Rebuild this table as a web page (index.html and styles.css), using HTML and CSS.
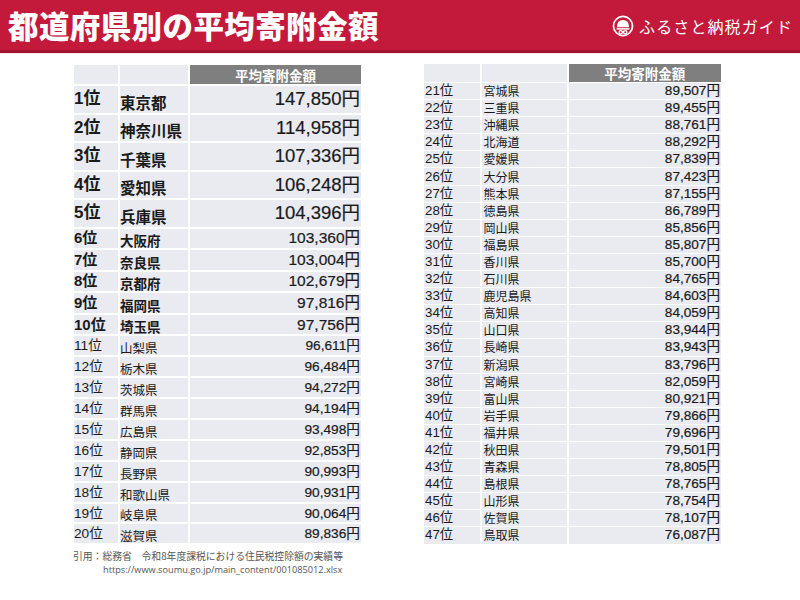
FILE: index.html
```html
<!DOCTYPE html>
<html lang="ja">
<head>
<meta charset="utf-8">
<title>都道府県別の平均寄附金額</title>
<link rel="stylesheet" href="styles.css">
</head>
<body>
<header class="topbar">
  <h1 class="title">都道府県別の平均寄附金額</h1>
  <div class="brand">
    <svg class="brand-icon" viewBox="0 0 24 24" width="22" height="22" aria-hidden="true">
      <circle cx="12" cy="12" r="10.4" fill="none" stroke="#fff" stroke-width="1.9"/>
      <path d="M5.4 13.4 Q5.4 5.4 12 5.4 Q18.6 5.4 18.6 13.4 Z" fill="#fff"/>
      <rect x="5" y="14.3" width="14" height="1.7" fill="#fff"/>
      <circle cx="9.5" cy="18.8" r="1.8" fill="none" stroke="#fff" stroke-width="1.4"/>
      <circle cx="14.5" cy="18.8" r="1.8" fill="none" stroke="#fff" stroke-width="1.4"/>
      <circle cx="12" cy="18.2" r="1.1" fill="#fff"/>
    </svg>
    <span class="brand-name">ふるさと納税ガイド</span>
  </div>
</header>

<main class="content">
  <section class="col-left">
    <table class="rank-table left">
      <colgroup><col class="c-rank"><col class="c-pref"><col class="c-val"></colgroup>
      <tr class="head"><td></td><td></td><th>平均寄附金額</th></tr>
      <tr class="big"><td class="rk">1位</td><td class="pf">東京都</td><td class="vl">147,850円</td></tr>
      <tr class="big"><td class="rk">2位</td><td class="pf">神奈川県</td><td class="vl">114,958円</td></tr>
      <tr class="big"><td class="rk">3位</td><td class="pf">千葉県</td><td class="vl">107,336円</td></tr>
      <tr class="big"><td class="rk">4位</td><td class="pf">愛知県</td><td class="vl">106,248円</td></tr>
      <tr class="big"><td class="rk">5位</td><td class="pf">兵庫県</td><td class="vl">104,396円</td></tr>
      <tr class="mid"><td class="rk">6位</td><td class="pf">大阪府</td><td class="vl">103,360円</td></tr>
      <tr class="mid"><td class="rk">7位</td><td class="pf">奈良県</td><td class="vl">103,004円</td></tr>
      <tr class="mid"><td class="rk">8位</td><td class="pf">京都府</td><td class="vl">102,679円</td></tr>
      <tr class="mid"><td class="rk">9位</td><td class="pf">福岡県</td><td class="vl">97,816円</td></tr>
      <tr class="mid"><td class="rk">10位</td><td class="pf">埼玉県</td><td class="vl">97,756円</td></tr>
      <tr class="small"><td class="rk">11位</td><td class="pf">山梨県</td><td class="vl">96,611円</td></tr>
      <tr class="small"><td class="rk">12位</td><td class="pf">栃木県</td><td class="vl">96,484円</td></tr>
      <tr class="small"><td class="rk">13位</td><td class="pf">茨城県</td><td class="vl">94,272円</td></tr>
      <tr class="small"><td class="rk">14位</td><td class="pf">群馬県</td><td class="vl">94,194円</td></tr>
      <tr class="small"><td class="rk">15位</td><td class="pf">広島県</td><td class="vl">93,498円</td></tr>
      <tr class="small"><td class="rk">16位</td><td class="pf">静岡県</td><td class="vl">92,853円</td></tr>
      <tr class="small"><td class="rk">17位</td><td class="pf">長野県</td><td class="vl">90,993円</td></tr>
      <tr class="small"><td class="rk">18位</td><td class="pf">和歌山県</td><td class="vl">90,931円</td></tr>
      <tr class="small"><td class="rk">19位</td><td class="pf">岐阜県</td><td class="vl">90,064円</td></tr>
      <tr class="small"><td class="rk">20位</td><td class="pf">滋賀県</td><td class="vl">89,836円</td></tr>
    </table>
    <p class="source">引用：総務省　令和8年度課税における住民税控除額の実績等<br><span class="url">https://www.soumu.go.jp/main_content/001085012.xlsx</span></p>
  </section>

  <section class="col-right">
    <table class="rank-table right">
      <colgroup><col class="c-rank"><col class="c-pref"><col class="c-val"></colgroup>
      <tr class="head"><td></td><td></td><th>平均寄附金額</th></tr>
      <tr><td class="rk">21位</td><td class="pf">宮城県</td><td class="vl">89,507円</td></tr>
      <tr><td class="rk">22位</td><td class="pf">三重県</td><td class="vl">89,455円</td></tr>
      <tr><td class="rk">23位</td><td class="pf">沖縄県</td><td class="vl">88,761円</td></tr>
      <tr><td class="rk">24位</td><td class="pf">北海道</td><td class="vl">88,292円</td></tr>
      <tr><td class="rk">25位</td><td class="pf">愛媛県</td><td class="vl">87,839円</td></tr>
      <tr><td class="rk">26位</td><td class="pf">大分県</td><td class="vl">87,423円</td></tr>
      <tr><td class="rk">27位</td><td class="pf">熊本県</td><td class="vl">87,155円</td></tr>
      <tr><td class="rk">28位</td><td class="pf">徳島県</td><td class="vl">86,789円</td></tr>
      <tr><td class="rk">29位</td><td class="pf">岡山県</td><td class="vl">85,856円</td></tr>
      <tr><td class="rk">30位</td><td class="pf">福島県</td><td class="vl">85,807円</td></tr>
      <tr><td class="rk">31位</td><td class="pf">香川県</td><td class="vl">85,700円</td></tr>
      <tr><td class="rk">32位</td><td class="pf">石川県</td><td class="vl">84,765円</td></tr>
      <tr><td class="rk">33位</td><td class="pf">鹿児島県</td><td class="vl">84,603円</td></tr>
      <tr><td class="rk">34位</td><td class="pf">高知県</td><td class="vl">84,059円</td></tr>
      <tr><td class="rk">35位</td><td class="pf">山口県</td><td class="vl">83,944円</td></tr>
      <tr><td class="rk">36位</td><td class="pf">長崎県</td><td class="vl">83,943円</td></tr>
      <tr><td class="rk">37位</td><td class="pf">新潟県</td><td class="vl">83,796円</td></tr>
      <tr><td class="rk">38位</td><td class="pf">宮崎県</td><td class="vl">82,059円</td></tr>
      <tr><td class="rk">39位</td><td class="pf">富山県</td><td class="vl">80,921円</td></tr>
      <tr><td class="rk">40位</td><td class="pf">岩手県</td><td class="vl">79,866円</td></tr>
      <tr><td class="rk">41位</td><td class="pf">福井県</td><td class="vl">79,696円</td></tr>
      <tr><td class="rk">42位</td><td class="pf">秋田県</td><td class="vl">79,501円</td></tr>
      <tr><td class="rk">43位</td><td class="pf">青森県</td><td class="vl">78,805円</td></tr>
      <tr><td class="rk">44位</td><td class="pf">島根県</td><td class="vl">78,765円</td></tr>
      <tr><td class="rk">45位</td><td class="pf">山形県</td><td class="vl">78,754円</td></tr>
      <tr><td class="rk">46位</td><td class="pf">佐賀県</td><td class="vl">78,107円</td></tr>
      <tr><td class="rk">47位</td><td class="pf">鳥取県</td><td class="vl">76,087円</td></tr>
    </table>
  </section>
</main>
</body>
</html>
```

FILE: styles.css
```css
* { box-sizing: border-box; }

html, body {
  margin: 0;
  padding: 0;
  background: #ffffff;
}

body {
  width: 800px;
  height: 600px;
  overflow: hidden;
  font-family: "Liberation Sans", "Noto Sans CJK JP", sans-serif;
  color: #1a1a1a;
}

/* ---------- header ---------- */
.topbar {
  height: 53px;
  background: #c31a3b;
  border-bottom: 3px solid #a0132f;
  box-shadow: 0 1px 0 #f6dfe4;
  display: flex;
  align-items: center;
  justify-content: space-between;
  padding: 0 7px 0 8px;
}

.title {
  margin: 0;
  font-family: "Noto Sans CJK JP", sans-serif;
  font-weight: 900;
  font-size: 30.5px;
  letter-spacing: 0.4px;
  color: #ffffff;
  line-height: 1;
  padding-top: 1px;
}

.brand {
  display: flex;
  align-items: center;
  gap: 5px;
  color: #ffffff;
  padding-top: 2px;
}

.brand-icon { display: block; }

.brand-name {
  font-family: "Noto Sans CJK JP", sans-serif;
  font-size: 16px;
  letter-spacing: 1.1px;
  font-weight: 400;
}

/* ---------- content ---------- */
.content {
  display: flex;
  align-items: flex-start;
  padding: 10px 0 0 72px;
  gap: 60px;
}

.rank-table {
  border-collapse: collapse;
  table-layout: fixed;
}

.rank-table td,
.rank-table th {
  padding: 0;
  background: #e9ebf1;
  white-space: nowrap;
  overflow: hidden;
}

.rank-table th {
  background: #7f7f7f;
  color: #ffffff;
  font-family: "Noto Sans CJK JP", sans-serif;
  font-weight: 700;
  text-align: center;
}

.rank-table .pf {
  font-family: "Noto Sans CJK JP", sans-serif;
}

.rank-table .vl {
  text-align: right;
  -webkit-text-stroke: 0.2px currentColor;
}

/* left table */
.left { width: 289px; }
.left td, .left th { border: 2px solid #ffffff; }
.left .c-rank { width: 46px; }
.left .c-pref { width: 70px; }
.left .c-val { width: 173px; }

.left .head { height: 21px; }
.left th { font-size: 13.5px; line-height: 16px; }

.left .vl { padding-right: 1px; }
.left .pf { vertical-align: bottom; }

.left .big { height: 28.5px; }
.left .big td { line-height: 20px; }
.left .big .rk { font-size: 17px; font-weight: 700; }
.left .big .pf { font-size: 15.5px; font-weight: 700; padding-bottom: 1px; }
.left .big .vl { font-size: 18.5px; }

.left .mid { height: 21.6px; }
.left .mid td { line-height: 16px; }
.left .mid .rk { font-size: 15px; font-weight: 700; }
.left .mid .pf { font-size: 13.5px; font-weight: 700; }
.left .mid .vl { font-size: 15.5px; }

.left .small { height: 20.9px; }
.left .small td { line-height: 15px; }
.left .small .rk { font-size: 13.7px; }
.left .small .pf { font-size: 12.5px; }
.left .small .vl { font-size: 13.7px; }

.source {
  margin: 5px 0 0 1px;
  font-family: "Noto Sans CJK JP", sans-serif;
  font-size: 9.8px;
  line-height: 13px;
  color: #555555;
}

.source .url {
  display: inline-block;
  padding-left: 30px;
  font-family: "Open Sans", sans-serif;
  font-size: 9.2px;
  line-height: 14px;
}

/* right table */
.right { width: 298px; }
.right td, .right th { border: 1px solid #ffffff; }
.right td + td, .right td + th { border-left-width: 2px; }
.right .c-rank { width: 57px; }
.right .c-pref { width: 87px; }
.right .c-val { width: 154px; }

.right .head { height: 19px; }
.right th { font-size: 13.5px; line-height: 16px; }
.right tr { height: 17.1px; }
.right td { line-height: 14px; }
.right .rk { font-size: 13.3px; padding-left: 1px; }
.right .pf { font-size: 12px; padding-left: 2px; }
.right .vl { font-size: 13.6px; padding-right: 1px; }
```
